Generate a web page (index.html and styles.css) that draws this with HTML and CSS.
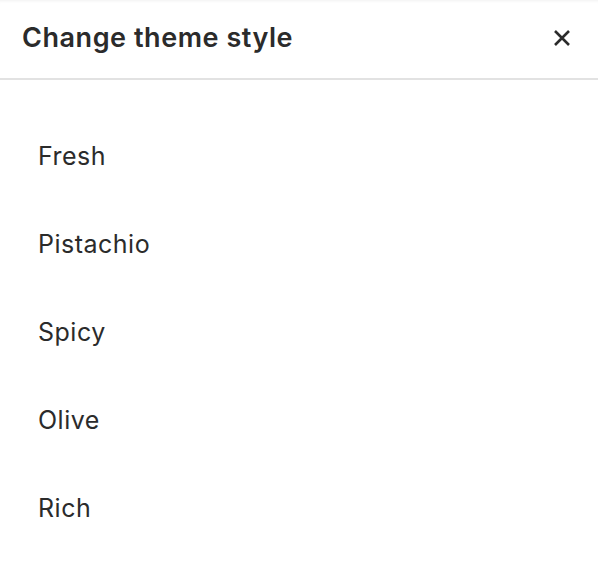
FILE: index.html
```html
<!DOCTYPE html>
<html lang="en">
<head>
<meta charset="utf-8">
<link rel="stylesheet" href="styles.css">
</head>
<body>
<div class="panel">
  <header class="header">
    <h1 class="title">Change theme style</h1>
    <button class="close" aria-label="Close">
      <svg width="20" height="20" viewBox="0 0 20 20"><path d="M3 3 L17 17 M17 3 L3 17" stroke="#2b2b2b" stroke-width="2.6" fill="none"/></svg>
    </button>
  </header>
  <ul class="list">
    <li class="item">Fresh</li>
    <li class="item">Pistachio</li>
    <li class="item">Spicy</li>
    <li class="item">Olive</li>
    <li class="item">Rich</li>
  </ul>
</div>
</body>
</html>
```
FILE: styles.css
```css
* { box-sizing: border-box; }
html, body { margin: 0; padding: 0; background: #fff; }
body { font-family: Inter, "Noto Sans", sans-serif; color: #2b2b2b; }
.panel {
  width: 598px;
  height: 564px;
  background: #fff;
  box-shadow: inset 0 3px 3px -2px rgba(0,0,0,0.06);
}
.header {
  height: 80px;
  display: flex;
  align-items: center;
  justify-content: space-between;
  padding: 0 21px 3px 22px;
  border-bottom: 2px solid #e2e2e2;
}
.title {
  margin: 0;
  font-size: 27px;
  font-weight: 600;
  letter-spacing: 0.55px;
  color: #2b2b2b;
}
.close {
  border: 0;
  background: none;
  padding: 0;
  width: 30px;
  height: 30px;
  display: flex;
  align-items: center;
  justify-content: center;
}
.list {
  list-style: none;
  margin: 0;
  padding: 41px 0 0 38px;
}
.item {
  font-size: 25px;
  line-height: 30px;
  height: 88px;
  padding-top: 20px;
  letter-spacing: 0.5px;
  color: #2b2b2b;
}
```
